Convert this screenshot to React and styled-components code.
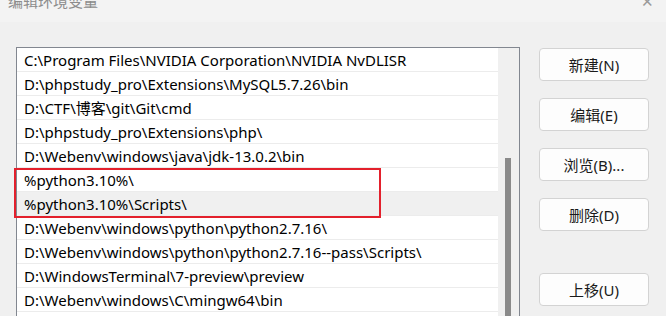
import React from 'react';
import styled, { createGlobalStyle } from 'styled-components';

const GlobalStyle = createGlobalStyle`
  html, body {
    margin: 0;
    padding: 0;
    background: #f0f0f0;
  }
  body {
    font-family: "Noto Sans", "Noto Sans CJK SC", sans-serif;
  }
`;

const Window = styled.div`
  width: 666px;
  height: 316px;
  overflow: hidden;
  background: #f0f0f0;
`;

const TitleBar = styled.div`
  height: 22px;
  display: flex;
  justify-content: space-between;
  align-items: flex-start;
  padding: 0 12px 0 8px;
  background: #f3f3f3;
  overflow: hidden;
`;

const Title = styled.div`
  margin-top: -10px;
  font-size: 15px;
  line-height: 22px;
  color: #8c8c8c;
`;

const Close = styled.div`
  margin-top: -9px;
  font-size: 15px;
  line-height: 20px;
  color: #9a9a9a;
`;

const Body = styled.div`
  display: flex;
  align-items: flex-start;
  padding: 25px 0 0 16px;
`;

const ListBox = styled.div`
  position: relative;
  width: 502px;
  height: 290px;
  display: flex;
  border: 1px solid #828790;
  border-bottom: none;
  background: #fff;
`;

const Rows = styled.div`
  width: 481px;
  display: flex;
  flex-direction: column;
`;

const Row = styled.div`
  height: 23px;
  flex: none;
  display: flex;
  align-items: center;
  padding-left: 7px;
  border-bottom: 1px solid #ececec;
  background: ${({ $selected }) => ($selected ? '#f0f0f0' : '#fff')};
  font-size: 15px;
  color: #000;
  white-space: nowrap;
  overflow: hidden;
`;

const Track = styled.div`
  width: 21px;
  background: #f0f0f0;
  padding: 110px 0 0 7px;
  box-sizing: border-box;
`;

const Thumb = styled.div`
  width: 6px;
  height: 200px;
  background: #8a8a8a;
`;

const Highlight = styled.div`
  position: absolute;
  left: -3px;
  top: 120px;
  width: 363px;
  height: 46px;
  border: 2px solid #e3202c;
  pointer-events: none;
`;

const Buttons = styled.div`
  display: flex;
  flex-direction: column;
  gap: 17px;
  margin-left: 19px;
  padding-top: 1px;
`;

const Button = styled.button`
  width: 110px;
  height: 33px;
  margin-top: ${({ $spaced }) => ($spaced ? '25px' : '0')};
  border: 1px solid #d3d3d3;
  border-radius: 4px;
  background: #fdfdfd;
  font-family: "Noto Sans", "Noto Sans CJK SC", sans-serif;
  font-size: 15px;
  color: #1a1a1a;
  padding: 0;
`;

const paths = [
  'C:\\Program Files\\NVIDIA Corporation\\NVIDIA NvDLISR',
  'D:\\phpstudy_pro\\Extensions\\MySQL5.7.26\\bin',
  'D:\\CTF\\博客\\git\\Git\\cmd',
  'D:\\phpstudy_pro\\Extensions\\php\\',
  'D:\\Webenv\\windows\\java\\jdk-13.0.2\\bin',
  '%python3.10%\\',
  '%python3.10%\\Scripts\\',
  'D:\\Webenv\\windows\\python\\python2.7.16\\',
  'D:\\Webenv\\windows\\python\\python2.7.16--pass\\Scripts\\',
  'D:\\WindowsTerminal\\7-preview\\preview',
  'D:\\Webenv\\windows\\C\\mingw64\\bin',
  '',
];

export default function App() {
  return (
    <Window>
      <GlobalStyle />
      <TitleBar>
        <Title>编辑环境变量</Title>
        <Close>✕</Close>
      </TitleBar>
      <Body>
        <ListBox>
          <Rows>
            {paths.map((p, i) => (
              <Row key={i} $selected={i === 6}>{p}</Row>
            ))}
          </Rows>
          <Track>
            <Thumb />
          </Track>
          <Highlight />
        </ListBox>
        <Buttons>
          <Button>新建(N)</Button>
          <Button>编辑(E)</Button>
          <Button>浏览(B)...</Button>
          <Button>删除(D)</Button>
          <Button $spaced>上移(U)</Button>
        </Buttons>
      </Body>
    </Window>
  );
}
